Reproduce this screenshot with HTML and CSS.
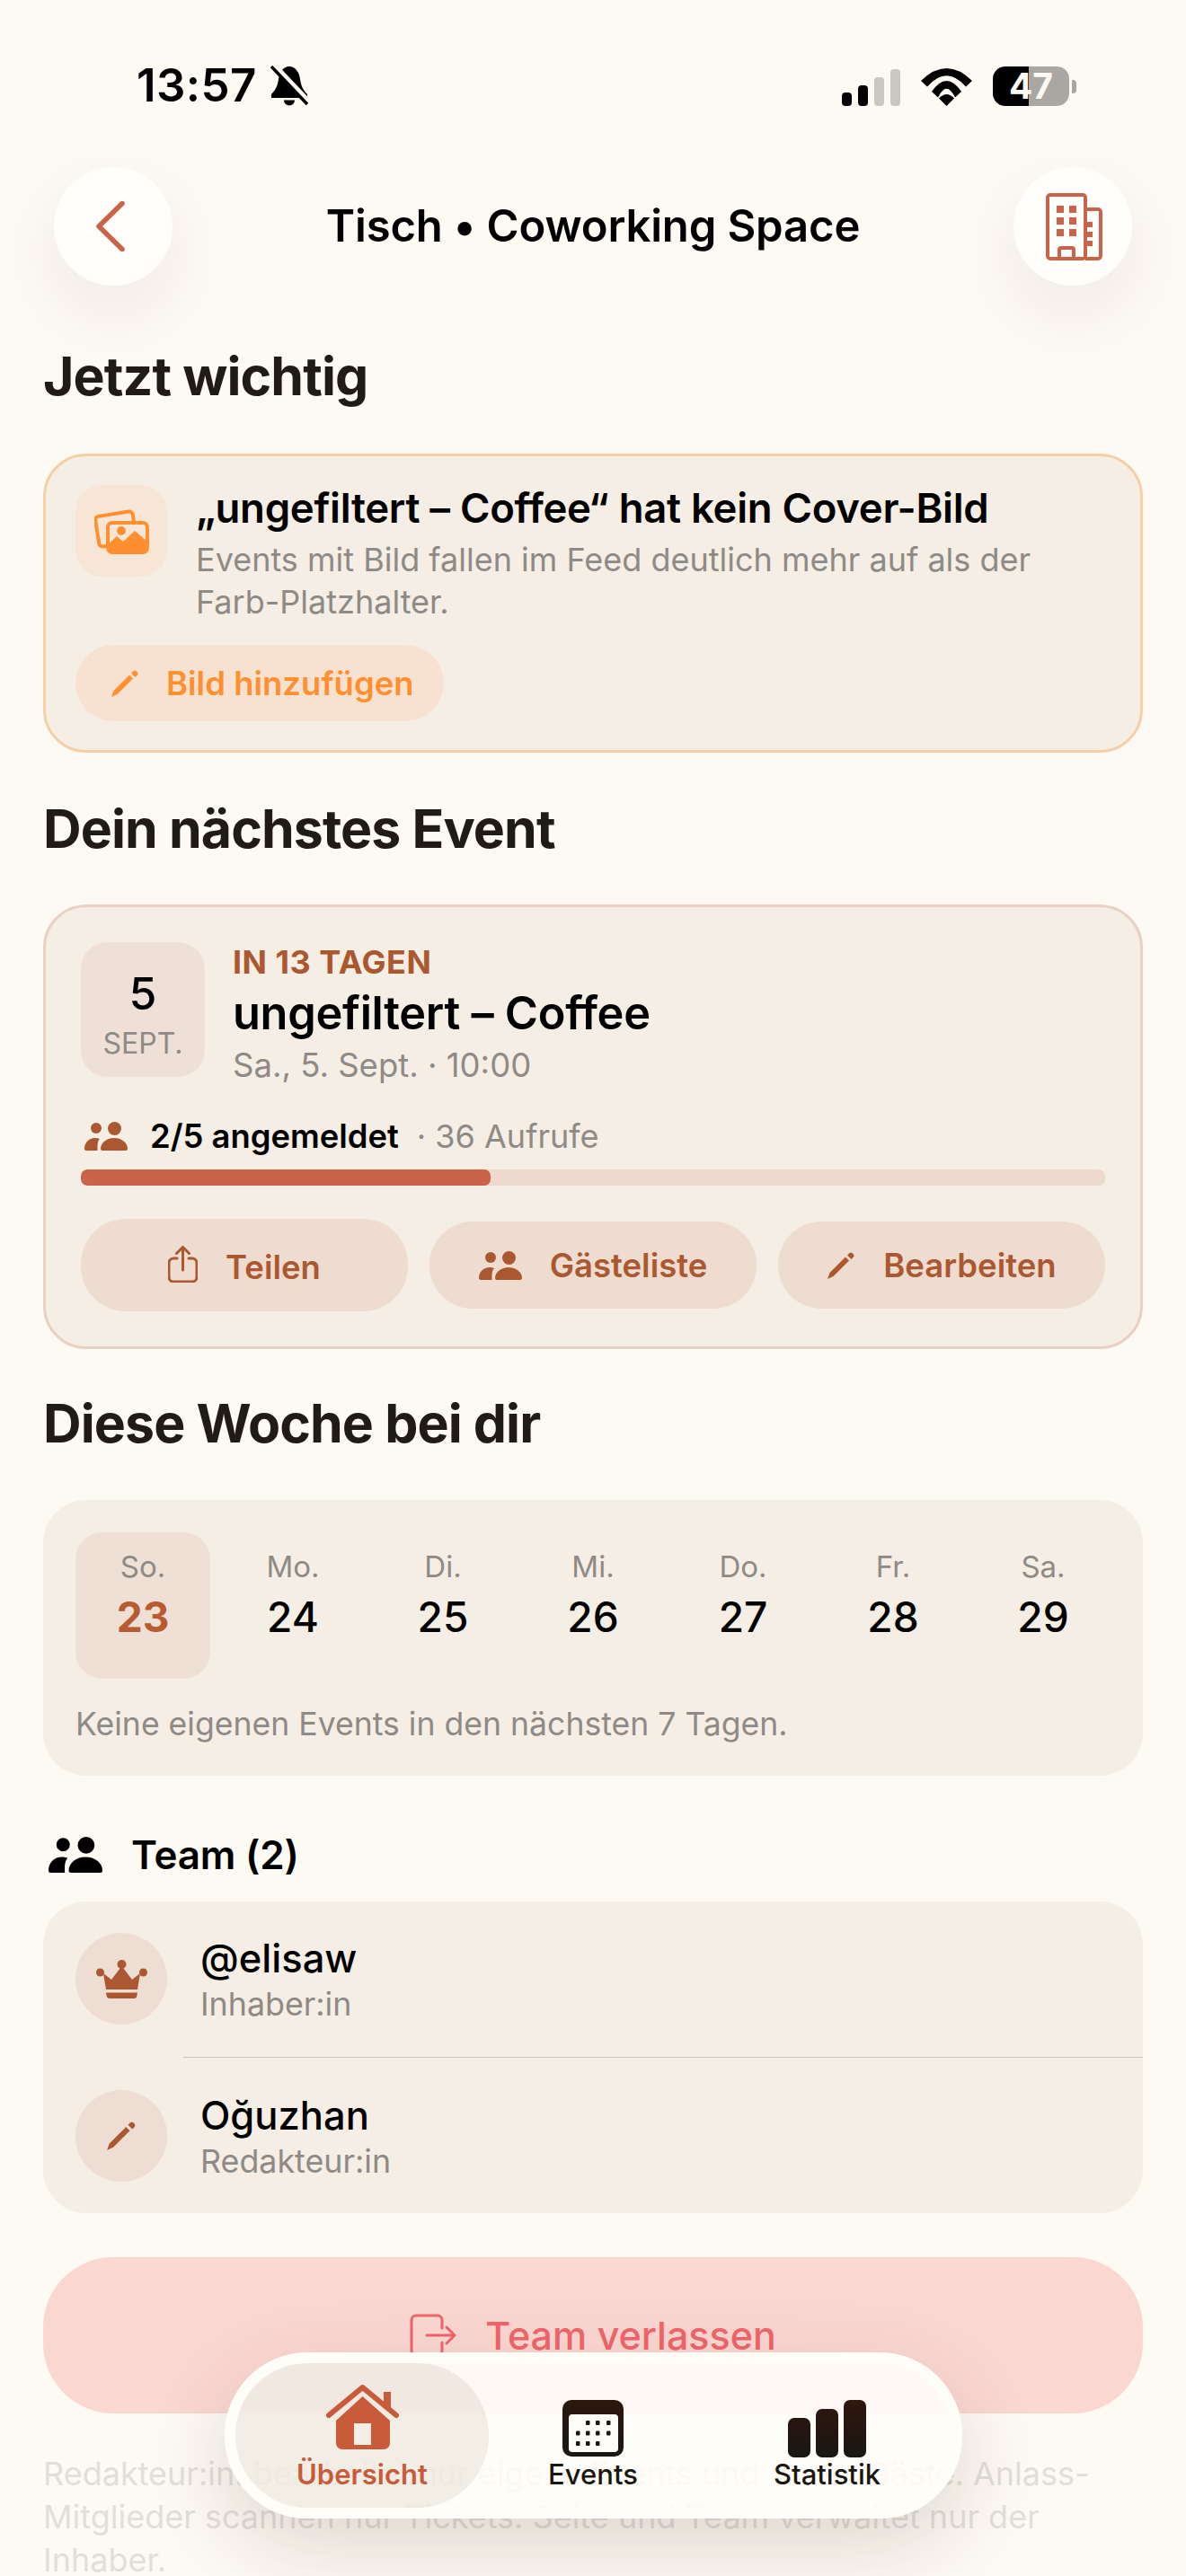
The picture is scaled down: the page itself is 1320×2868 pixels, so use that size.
FILE: index.html
```html
<!DOCTYPE html>
<html lang="de">
<head>
<meta charset="utf-8">
<title>Tisch • Coworking Space</title>
<link rel="stylesheet" href="styles.css">
</head>
<body>
<svg class="defs" width="0" height="0" aria-hidden="true">
  <defs>
    <linearGradient id="dark" x1="0" y1="0" x2="0" y2="1"><stop offset="0" stop-color="#2e170e"/><stop offset="0.45" stop-color="#241610"/><stop offset="1" stop-color="#1a1712"/></linearGradient>
    <symbol id="people" viewBox="0 0 48 32">
      <circle cx="13" cy="7" r="6"/><circle cx="33.5" cy="7.5" r="7.5"/>
      <path d="M18 30C18 23 25 18 33 18C41 18 48 23 48 30Q48 32 46 32H20Q18 32 18 30Z"/>
      <path d="M0 30C0 23 5 18 12 18C14 18 16 18.5 17 19C14 22 14.5 27 14.5 32H2Q0 32 0 30Z"/>
    </symbol>
    <symbol id="pencil" viewBox="0 0 32 30">
      <path d="M1 30L3.5 23L21 5.5L25 9.5L7.5 27Z"/>
      <path d="M23 3.5L25.5 1Q27 0 28.5 1L30 2.5Q31 4 30 5.5L27.5 8Z"/>
    </symbol>
  </defs>
</svg>
<div class="screen">
  <div class="statusbar">
    <div class="status-left">
      <span class="clock">13:57</span>
      <svg class="bell" viewBox="0 0 42 45">
        <path d="M21 1C14 1 10 8 9 15C8 22 6 27 1 32V36H41V32C36 27 34 22 33 15C32 8 28 1 21 1Z"/>
        <path d="M15 38.500a6 6 0 0 0 12 0Z"/>
        <path class="bell-gap" d="M5 0L45 42"/>
        <path class="bell-line" d="M1 1L41 43"/>
      </svg>
    </div>
    <div class="status-right">
      <div class="signal"><span class="bar bar1"></span><span class="bar bar2"></span><span class="bar bar3"></span><span class="bar bar4"></span></div>
      <svg class="wifi" viewBox="0 0 57 42">
        <path d="M0 14Q28.500 -14 57 14L50 20.500Q28.500 -4 7 20.500Z"/>
        <path d="M12 26Q28.500 2 45 26L38 32.500Q28.500 13 19 32.500Z"/>
        <path d="M20 33.500Q28.500 24.500 37 33.500L28.500 42Z"/>
      </svg>
      <div class="battery"><span class="battery-body">47</span><span class="battery-cap"></span></div>
    </div>
  </div>

  <header class="topbar">
    <button class="round-btn" aria-label="Zurück">
      <svg class="chev" viewBox="0 0 32 56"><path d="M29 2.500L3 28L29 53.500"/></svg>
    </button>
    <h1 class="page-title">Tisch • Coworking Space</h1>
    <button class="round-btn" aria-label="Ort">
      <svg class="building" viewBox="0 0 63 75">
        <rect class="b-line" x="2" y="2" width="42" height="71" rx="3"/>
        <path class="b-line" d="M44 18H58a3 3 0 0 1 3 3V70a3 3 0 0 1-3 3H44"/>
        <path class="b-fill" d="M12 14h8v8h-8zM26 14h8v8h-8zM12 27h8v8h-8zM26 27h8v8h-8zM12 40h8v8h-8zM26 40h8v8h-8zM46 32h6v6h-6zM46 43h6v6h-6zM46 53h6v6h-6z"/>
        <path class="b-line" d="M15 73V63a2 2 0 0 1 2-2H29a2 2 0 0 1 2 2V73"/>
      </svg>
    </button>
  </header>

  <main class="content">
    <h2 class="section-title first">Jetzt wichtig</h2>
    <section class="card alert-card">
      <div class="alert-row">
        <div class="alert-icon">
          <svg class="photos" viewBox="0 0 61 51">
            <rect class="ph-line" x="3" y="6" width="42" height="34" rx="4" transform="rotate(-9 24 23)"/>
            <rect class="ph-front" x="15" y="16" width="44" height="33" rx="5"/>
            <path class="ph-fill" d="M15 44V40L25 31L32 37L45 25L59 37V44a5 5 0 0 1-5 5H20a5 5 0 0 1-5-5Z"/>
            <circle class="ph-fill" cx="30" cy="25" r="5"/>
          </svg>
        </div>
        <div class="alert-text">
          <div class="alert-title">„ungefiltert – Coffee“ hat kein Cover-Bild</div>
          <p class="alert-sub">Events mit Bild fallen im Feed deutlich mehr auf als der Farb-Platzhalter.</p>
        </div>
      </div>
      <button class="alert-btn">
        <svg class="ico-pencil"><use href="#pencil"/></svg>
        <span>Bild hinzufügen</span>
      </button>
    </section>

    <h2 class="section-title second">Dein nächstes Event</h2>
    <section class="card event-card">
      <div class="event-head">
        <div class="date-box"><span class="date-num">5</span><span class="date-mon">SEPT.</span></div>
        <div class="event-info">
          <div class="event-label">IN 13 TAGEN</div>
          <div class="event-name">ungefiltert – Coffee</div>
          <div class="event-date">Sa., 5. Sept. · 10:00</div>
        </div>
      </div>
      <div class="stats">
        <svg class="ico-people"><use href="#people"/></svg>
        <span class="stats-main">2/5 angemeldet</span>
        <span class="stats-sub">· 36 Aufrufe</span>
      </div>
      <div class="progress"><div class="progress-fill" style="width:40%"></div></div>
      <div class="actions">
        <button class="action action-tall">
          <svg class="ico-share" viewBox="0 0 33 41"><path d="M10 14H6a5 5 0 0 0-5 5V35a5 5 0 0 0 5 5H27a5 5 0 0 0 5-5V19a5 5 0 0 0-5-5H23"/><path d="M16.500 27V2M9.500 8.500L16.500 1.500L23.500 8.500"/></svg>
          <span>Teilen</span>
        </button>
        <button class="action">
          <svg class="ico-people"><use href="#people"/></svg>
          <span>Gästeliste</span>
        </button>
        <button class="action">
          <svg class="ico-pencil"><use href="#pencil"/></svg>
          <span>Bearbeiten</span>
        </button>
      </div>
    </section>

    <h2 class="section-title third">Diese Woche bei dir</h2>
    <section class="plain-card week-card">
      <div class="week">
        <div class="day today"><span class="wd">So.</span><span class="dn">23</span></div>
        <div class="day"><span class="wd">Mo.</span><span class="dn">24</span></div>
        <div class="day"><span class="wd">Di.</span><span class="dn">25</span></div>
        <div class="day"><span class="wd">Mi.</span><span class="dn">26</span></div>
        <div class="day"><span class="wd">Do.</span><span class="dn">27</span></div>
        <div class="day"><span class="wd">Fr.</span><span class="dn">28</span></div>
        <div class="day"><span class="wd">Sa.</span><span class="dn">29</span></div>
      </div>
      <p class="week-note">Keine eigenen Events in den nächsten 7 Tagen.</p>
    </section>

    <div class="team-head">
      <svg class="ico-team"><use href="#people"/></svg>
      <span>Team (2)</span>
    </div>
    <section class="plain-card team-card">
      <div class="member member-first">
        <div class="avatar">
          <svg class="crown" viewBox="0 0 57 43">
            <circle cx="28.500" cy="5" r="5"/><circle cx="4.500" cy="14" r="4.500"/><circle cx="52.500" cy="14" r="4.500"/>
            <path d="M8 15L17 22L28.500 7L40 22L49 15L46 33H11Z"/>
            <path d="M11 36.500H46L45.500 39.500Q45 43 42 43H15Q12 43 11.500 39.500Z"/>
          </svg>
        </div>
        <div class="member-text"><div class="member-name">@elisaw</div><div class="member-role">Inhaber:in</div></div>
      </div>
      <div class="divider"></div>
      <div class="member">
        <div class="avatar"><svg class="ico-pencil"><use href="#pencil"/></svg></div>
        <div class="member-text"><div class="member-name">Oğuzhan</div><div class="member-role">Redakteur:in</div></div>
      </div>
    </section>

    <button class="leave">
      <svg class="ico-leave" viewBox="0 0 52 48"><path d="M36 16V7a5 5 0 0 0-5-5H7a5 5 0 0 0-5 5V41a5 5 0 0 0 5 5H31a5 5 0 0 0 5-5V32"/><path d="M19 24H50M41 15L50 24L41 33"/></svg>
      <span>Team verlassen</span>
    </button>
    <p class="foot-note">Redakteur:in. bearbeitet nur eigene Events und deren Gäste. Anlass-Mitglieder scannen nur Tickets. Seite und Team verwaltet nur der Inhaber.</p>
  </main>

  <div class="fade"></div>

  <nav class="tabbar">
    <div class="tab tab-active">
      <svg class="ico-home" viewBox="0 0 81 72">
        <path d="M40.500 13L71 40V65a7 7 0 0 1-7 7H18a7 7 0 0 1-7-7V40ZM31 43V67H50V43Z" fill-rule="evenodd"/>
        <path d="M64 8h8v18l-8-7Z"/>
        <path class="home-roof" d="M3 34L40.500 3L78 34"/>
      </svg>
      <span class="tab-label">Übersicht</span>
    </div>
    <div class="tab">
      <svg class="ico-cal" viewBox="0 0 68 63">
        <rect width="68" height="63" rx="10" fill="url(#dark)"/>
        <rect x="7" y="16" width="55" height="42" rx="4" fill="#fffdf8"/>
        <g fill="#1d1712">
          <rect x="26" y="23" width="4.500" height="5" rx="1"/><rect x="37" y="23" width="4.500" height="5" rx="1"/><rect x="49" y="23" width="4.500" height="5" rx="1"/>
          <rect x="15" y="34.500" width="4.500" height="5" rx="1"/><rect x="26" y="34.500" width="4.500" height="5" rx="1"/><rect x="37" y="34.500" width="4.500" height="5" rx="1"/><rect x="49" y="34.500" width="4.500" height="5" rx="1"/>
          <rect x="15" y="46" width="4.500" height="5" rx="1"/><rect x="26" y="46" width="4.500" height="5" rx="1"/><rect x="37" y="46" width="4.500" height="5" rx="1"/>
        </g>
      </svg>
      <span class="tab-label">Events</span>
    </div>
    <div class="tab">
      <svg class="ico-bars" viewBox="0 0 87 64">
        <linearGradient id="dark2" gradientUnits="userSpaceOnUse" x1="0" y1="0" x2="0" y2="64"><stop offset="0" stop-color="#2e170e"/><stop offset="0.5" stop-color="#241610"/><stop offset="1" stop-color="#1a1712"/></linearGradient>
        <rect y="20" width="25" height="44" rx="7" fill="url(#dark2)"/><rect x="31" y="10" width="25" height="54" rx="7" fill="url(#dark2)"/><rect x="62" width="25" height="64" rx="7" fill="url(#dark2)"/>
      </svg>
      <span class="tab-label">Statistik</span>
    </div>
  </nav>
</div>
</body>
</html>
```

FILE: styles.css
```css
* { box-sizing: border-box; }
html, body { margin: 0; padding: 0; }
body { background: #fdf9f3; font-family: Inter, "Noto Sans", sans-serif; color: #000; }
button { font-family: inherit; border: 0; padding: 0; margin: 0; }
h1, h2, p { margin: 0; font-weight: inherit; font-size: inherit; }
.defs { position: absolute; }

.screen { position: relative; width: 1320px; height: 2868px; overflow: hidden; background: #fdf9f3; }

/* status bar */
.statusbar { height: 186px; display: flex; justify-content: space-between; align-items: flex-start; padding: 72px 122px 0 152px; }
.status-left { display: flex; align-items: center; gap: 15px; height: 46px; }
.clock { font-size: 51px; line-height: 46px; font-weight: 600; letter-spacing: 0.4px; }
.bell { width: 42px; height: 45px; }
.bell-gap { fill: none; stroke: #fdf9f3; stroke-width: 5; }
.bell-line { fill: none; stroke: #000; stroke-width: 3.500; }
.status-right { display: flex; align-items: flex-end; height: 46px; }
.signal { display: flex; align-items: flex-end; gap: 7px; height: 41px; margin-right: 23px; }
.bar { width: 11px; border-radius: 4px; background: #c9c7c1; }
.bar1 { height: 15px; background: #000; }
.bar2 { height: 23px; background: #000; }
.bar3 { height: 32px; }
.bar4 { height: 41px; }
.wifi { width: 57px; height: 42px; margin-right: 23px; }
.battery { display: flex; align-items: center; height: 44px; }
.battery-body { width: 85px; height: 44px; border-radius: 14px; background: linear-gradient(to right, #000 47%, #aaa7a2 47%); color: #fdf9f3; font-size: 39px; line-height: 44px; font-weight: 700; text-align: center; }
.battery-cap { width: 5px; height: 15px; margin-left: 3px; border-radius: 0 4px 4px 0; background: #aaa7a2; }

/* header */
.topbar { height: 132px; margin: 0 60px; display: flex; align-items: center; justify-content: space-between; }
.round-btn { width: 132px; height: 132px; border-radius: 50%; background: #fffefa; box-shadow: 0 30px 70px rgba(70, 50, 30, .07); display: flex; align-items: center; justify-content: center; }
.chev { width: 32px; height: 56px; margin-right: 6px; fill: none; stroke: #c8644a; stroke-width: 5.500; stroke-linecap: round; stroke-linejoin: round; }
.building { width: 63px; height: 75px; margin-left: 2px; }
.b-line { fill: none; stroke: #c8644a; stroke-width: 4; }
.b-fill { fill: #c8644a; }
.page-title { font-size: 49px; line-height: 60px; font-weight: 600; letter-spacing: -0.15px; }

/* content */
.content { padding: 0 48px; }
.section-title { font-size: 59px; line-height: 72px; font-weight: 700; letter-spacing: -0.9px; color: #201b15; }
.section-title.first { margin: 65px 0 50px; }
.section-title.second { margin: 49px 0 48px; }
.section-title.third { margin: 47px 0 49px; }

.card { background: #f5eee4; border-radius: 48px; border: 3px solid; }
.plain-card { background: #f5eee4; border-radius: 48px; }

.alert-card { border-color: #f6cfa8; padding: 32px 33px; height: 333px; }
.alert-row { display: flex; gap: 32px; }
.alert-icon { width: 102px; height: 102px; flex: none; border-radius: 30px; background: #f7e5d5; display: flex; align-items: center; justify-content: center; }
.photos { width: 61px; height: 51px; }
.ph-line { fill: none; stroke: #ff8f2f; stroke-width: 4; }
.ph-front { fill: #f7e5d5; stroke: #ff8f2f; stroke-width: 4; }
.ph-fill { fill: #ff8f2f; }
.alert-title { font-size: 45.500px; line-height: 52px; font-weight: 600; letter-spacing: -0.3px; white-space: nowrap; }
.alert-sub { margin-top: 8px; font-size: 36px; line-height: 47px; color: #8e8a85; }
.alert-btn { margin-top: 24px; height: 85px; width: 410px; border-radius: 43px; background: #f7e2d1; color: #ff8f2f; font-size: 36.500px; font-weight: 600; display: flex; align-items: center; gap: 30px; padding-left: 39px; }
.ico-pencil { width: 32px; height: 30px; fill: currentColor; flex: none; }

.event-card { border-color: #e9cfc4; padding: 39px 39px; height: 495px; }
.event-head { display: flex; gap: 31px; align-items: flex-start; }
.date-box { width: 138px; height: 150px; flex: none; border-radius: 30px; background: #efe0d7; display: flex; flex-direction: column; align-items: center; padding-top: 29px; }
.date-num { font-size: 50px; line-height: 56px; font-weight: 500; }
.date-mon { margin-top: 10px; font-size: 32px; line-height: 36px; color: #8e8a85; }
.event-label { font-size: 36px; line-height: 42px; font-weight: 700; color: #ab5830; margin-top: 1px; letter-spacing: 0.5px; }
.event-name { margin-top: 8px; font-size: 50.500px; line-height: 56px; font-weight: 600; letter-spacing: -0.3px; }
.event-date { margin-top: 8px; font-size: 36.500px; line-height: 44px; color: #8e8a85; }
.stats { margin-top: 35px; height: 44px; display: flex; align-items: center; }
.stats .ico-people { width: 48px; height: 32px; fill: #ab5830; margin: 0 25px 0 4px; flex: none; }
.stats-main { font-size: 36.400px; line-height: 44px; font-weight: 600; }
.stats-sub { margin-left: 20px; font-size: 36px; line-height: 44px; color: #8e8a85; }
.progress { margin-top: 15px; height: 18px; border-radius: 7px; background: #eed9cf; overflow: hidden; }
.progress-fill { height: 100%; border-radius: 7px; background: #c9634a; }
.actions { margin-top: 37px; height: 103px; display: flex; gap: 24px; align-items: center; }
.action { flex: 1; height: 97px; border-radius: 48px; background: #eedcd1; color: #ab5830; font-size: 36.500px; font-weight: 600; display: flex; align-items: center; justify-content: center; gap: 31px; }
.action-tall { height: 103px; border-radius: 50px; }
.action .ico-people { width: 48px; height: 32px; fill: currentColor; }
.ico-share { width: 33px; height: 41px; fill: none; stroke: currentColor; stroke-width: 3; stroke-linecap: round; stroke-linejoin: round; flex: none; margin-top: -2px; }
.action-tall span { margin-top: 4px; }

.week-card { height: 307px; padding: 36px 36px 0; }
.week { display: grid; grid-template-columns: repeat(7, 150px); column-gap: 17px; }
.day { height: 163px; border-radius: 30px; display: flex; flex-direction: column; align-items: center; padding-top: 16px; }
.today { background: #eee0d5; }
.wd { font-size: 33px; line-height: 44px; color: #8e8a85; }
.dn { margin-top: 6px; font-size: 46px; line-height: 56px; font-weight: 500; }
.today .dn { font-weight: 700; color: #b85a32; }
.week-note { margin-top: 28px; font-size: 35.600px; line-height: 46px; color: #8e8a85; }

.team-head { margin: 58px 0 22px; height: 60px; display: flex; align-items: center; gap: 32px; padding-left: 6px; font-size: 44px; font-weight: 600; letter-spacing: -0.2px; }
.ico-team { width: 60px; height: 40px; fill: #000; flex: none; }
.team-card { height: 347px; }
.member { display: flex; align-items: center; gap: 37px; padding: 35px 36px; height: 172px; }
.member-first { height: 173px; padding-bottom: 36px; }
.avatar { width: 102px; height: 102px; flex: none; border-radius: 50%; background: #eeddd3; color: #ab5830; display: flex; align-items: center; justify-content: center; }
.crown { width: 57px; height: 43px; fill: currentColor; }
.avatar .ico-pencil { width: 34px; height: 34px; }
.member-name { font-size: 43.500px; line-height: 52px; font-weight: 500; }
.member-role { margin-top: 3px; font-size: 35.800px; line-height: 44px; color: #8e8a85; }
.divider { height: 1px; margin: 0 0 1px 156px; background: #c9c5bd; }

.leave { width: 100%; margin-top: 49px; height: 174px; border-radius: 78px; background: #fbd7d2; color: #f0656a; display: flex; align-items: center; justify-content: center; gap: 32px; font-size: 43px; font-weight: 500; }
.ico-leave { width: 52px; height: 48px; fill: none; stroke: currentColor; stroke-width: 3; stroke-linecap: round; stroke-linejoin: round; flex: none; }
.foot-note { margin-top: 43px; font-size: 36px; line-height: 48px; color: #8e8a85; }

/* floating tab bar */
.fade { position: absolute; left: 0; right: 0; top: 2687px; bottom: 0; background: rgba(253, 249, 243, .76); }
.tabbar { position: absolute; left: 250px; top: 2619px; width: 821px; height: 185px; border-radius: 93px; padding: 12px 6px 12px 12px; background: rgba(255, 253, 248, .88); box-shadow: 0 30px 90px rgba(60, 45, 25, .16), inset 0 0 0 12px #fffdf8; display: grid; grid-template-columns: 282px 232px 1fr; }
.tab { display: flex; flex-direction: column; align-items: center; position: relative; padding-top: 41px; }
.tab-active { height: 161px; border-radius: 80px; background: rgba(130, 100, 70, .1); padding-top: 24px; }
.ico-home { width: 81px; height: 72px; fill: #c75b3a; }
.home-roof { fill: none; stroke: #c75b3a; stroke-width: 6; stroke-linecap: round; stroke-linejoin: round; }
.ico-cal { width: 68px; height: 63px; }
.ico-bars { width: 87px; height: 64px; }
.tab-label { position: absolute; top: 105px; left: 0; right: 0; text-align: center; font-size: 31px; line-height: 38px; font-weight: 500; color: #1a1712; }
.tab-active .tab-label { color: #c75b3a; font-weight: 600; }
```
